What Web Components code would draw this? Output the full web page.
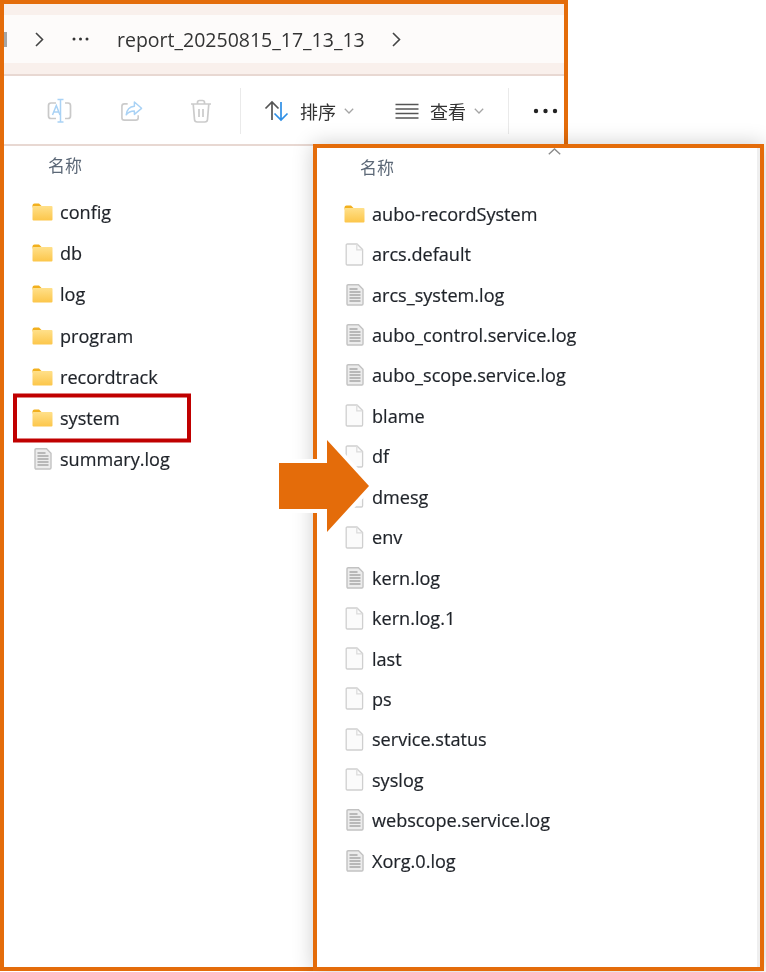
<!DOCTYPE html>
<html lang="zh">
<head>
<meta charset="utf-8">
<title>report</title>
<style>
	html, body { margin: 0; padding: 0; background: #fff; }
</style>
</head>
<body>
<shot-canvas>
	<explorer-window>
		<address-bar slot="top"></address-bar>
		<tool-bar slot="top"></tool-bar>
		<column-head>名称</column-head>
		<file-list gap="41.17">
			<file-row icon="folder">config</file-row>
			<file-row icon="folder">db</file-row>
			<file-row icon="folder">log</file-row>
			<file-row icon="folder">program</file-row>
			<file-row icon="folder">recordtrack</file-row>
			<file-row icon="folder" selected>system</file-row>
			<file-row icon="log">summary.log</file-row>
		</file-list>
	</explorer-window>
	<detail-panel>
		<column-head>名称</column-head>
		<file-list gap="40.44">
			<file-row icon="folder">aubo-recordSystem</file-row>
			<file-row icon="doc">arcs.default</file-row>
			<file-row icon="log">arcs_system.log</file-row>
			<file-row icon="log">aubo_control.service.log</file-row>
			<file-row icon="log">aubo_scope.service.log</file-row>
			<file-row icon="doc">blame</file-row>
			<file-row icon="doc">df</file-row>
			<file-row icon="doc">dmesg</file-row>
			<file-row icon="doc">env</file-row>
			<file-row icon="log">kern.log</file-row>
			<file-row icon="doc">kern.log.1</file-row>
			<file-row icon="doc">last</file-row>
			<file-row icon="doc">ps</file-row>
			<file-row icon="doc">service.status</file-row>
			<file-row icon="doc">syslog</file-row>
			<file-row icon="log">webscope.service.log</file-row>
			<file-row icon="log">Xorg.0.log</file-row>
		</file-list>
	</detail-panel>
	<big-arrow></big-arrow>
</shot-canvas>

<script>
const UI_FONT = `"Open Sans", "Noto Sans CJK SC", sans-serif`;

const ICONS = {
	folder: `<svg width="21" height="18" viewBox="0 0 21 18">
		<defs><linearGradient id="f" x1="0" y1="0" x2="0" y2="1"><stop offset="0" stop-color="#ffe08a"/><stop offset="1" stop-color="#fcc64a"/></linearGradient></defs>
		<path d="M0.5 2.5q0-2 2-2h4.5l2.5 2.5v1.5h-9z" fill="#f2b01e"/>
		<rect x="0.5" y="3" width="20" height="14.5" rx="1" fill="url(#f)"/>
	</svg>`,
	doc: `<svg width="19" height="23" viewBox="0 0 19 23" fill="#fbfbfb" stroke="#cfcfcf" stroke-width="1.300">
		<path d="M1.200 2.200q0-1.200 1.200-1.200h9.600l5.600 5.600v14.200q0 1.200-1.200 1.200h-14q-1.200 0-1.200-1.200z"/>
		<path d="M11.800 1v5.800h5.800" fill="none" stroke="#dcdcdc"/>
	</svg>`,
	log: `<svg width="18" height="22" viewBox="0 0 18 22">
		<path d="M1 2q0-1.200 1.200-1.200h10.300l4.500 4.500v14.500q0 1.200-1.200 1.200h-13.600q-1.200 0-1.200-1.200z" fill="#ececec" stroke="#c2c2c2" stroke-width="1.400"/>
		<path d="M3.500 5h8M3.500 8h11M3.500 11h11M3.500 14h11M3.500 17h11" stroke="#a6a6a6" stroke-width="1.300"/>
	</svg>`,
	rename: `<svg width="26" height="26" viewBox="0 0 26 26" fill="none">
		<path d="M9 5H4q-2.500 0-2.500 2.500v10.500q0 2.500 2.500 2.500H9M18 5h3q2.500 0 2.500 2.500v10.500q0 2.500-2.500 2.500h-3" stroke="#c9c9c9" stroke-width="1.700"/>
		<path d="M13.500 1.500v22.500M10.500 1.500h6M10.500 24h6" stroke="#a9d2f5" stroke-width="1.500"/>
		<path d="M5.500 17l3.800-9.500 3.700 9.500M6.800 14h5" stroke="#a9d2f5" stroke-width="1.500"/>
	</svg>`,
	share: `<svg width="23" height="23" viewBox="0 0 24 24" fill="none">
		<path d="M8 4H4.500Q2 4 2 6.500v12Q2 21 4.500 21h12q2.500 0 2.500-2.500V16" stroke="#cbcbcb" stroke-width="1.700"/>
		<path d="M15 2l7.500 6.700L15 15v-3.500c-4 0-6.500 1.200-8.500 4 .5-5 3-8.500 8.500-9z" stroke="#a9d2f5" stroke-width="1.500" stroke-linejoin="round"/>
	</svg>`,
	trash: `<svg width="22" height="24" viewBox="0 0 22 24" fill="none" stroke="#cbcbcb" stroke-width="1.700">
		<path d="M1 5h20M7.500 5V3.500Q7.500 1.500 9.500 1.500h3q2 0 2 2V5M3.200 5l1.300 15.500q.2 2.500 2.700 2.500h7.600q2.500 0 2.700-2.500L18.800 5M9 10v8M13 10v8"/>
	</svg>`,
	sort: `<svg width="25" height="22" viewBox="0 0 25 22" fill="none" stroke-width="1.700">
		<path d="M8 20V2M1.500 8.500L8 2l6.500 6.500" stroke="#555"/>
		<path d="M17 2v18M10.500 13.500L17 20l6.500-6.500" stroke="#2e8fe6"/>
	</svg>`,
	lines: `<svg width="24" height="16" viewBox="0 0 24 16" fill="none" stroke="#555" stroke-width="1.500">
		<path d="M0.500 1.500h23M0.500 6h23M0.500 10.500h23M0.500 15h23"/>
	</svg>`,
	more: `<svg width="25" height="6" viewBox="0 0 25 6" fill="#222"><circle cx="3" cy="3" r="2.200"/><circle cx="12.500" cy="3" r="2.200"/><circle cx="22" cy="3" r="2.200"/></svg>`,
	dots: `<svg width="17" height="4" viewBox="0 0 17 4" fill="#333"><circle cx="2" cy="2" r="1.500"/><circle cx="8.500" cy="2" r="1.500"/><circle cx="15" cy="2" r="1.500"/></svg>`,
	next: `<svg width="9" height="15" viewBox="0 0 9 15" fill="none" stroke="#444" stroke-width="1.600"><path d="M1 1l6.500 6.500L1 14"/></svg>`,
	drop: `<svg width="10" height="6" viewBox="0 0 10 6" fill="none" stroke="#a5a5a5" stroke-width="1.300"><path d="M.8.800L5 5 9.200.800"/></svg>`,
	up: `<svg width="13" height="7" viewBox="0 0 13 7" fill="none" stroke="#8a8a8a" stroke-width="1.400"><path d="M.8 6.200L6.500 1l5.700 5.200"/></svg>`,
};

class UiIcon extends HTMLElement {
	connectedCallback() {
		const name = this.getAttribute("name");
		this.attachShadow({ mode: "open" }).innerHTML = `
			<style>:host { display: inline-flex; flex: none; align-items: center; justify-content: center; } svg { display: block; }</style>
			${ICONS[name] || ""}`;
	}
}

class ShotCanvas extends HTMLElement {
	constructor() {
		super();
		// the reference is a rescaled screenshot, so everything is a touch soft
		this.attachShadow({ mode: "open" }).innerHTML = `
			<style>
				:host { display: block; position: relative; width: 766px; height: 972px; overflow: hidden; background: #fff; font-family: ${UI_FONT}; filter: blur(.35px); }
			</style>
			<slot></slot>`;
	}
}

class ExplorerWindow extends HTMLElement {
	constructor() {
		super();
		this.attachShadow({ mode: "open" }).innerHTML = `
			<style>
				:host { display: flex; flex-direction: column; box-sizing: border-box; width: 568px; height: 971px; border: 4px solid #e46c0a; background: #fff; }
				.body { padding: 6px 0 0 28px; }
			</style>
			<slot name="top"></slot>
			<div class="body"><slot></slot></div>`;
	}
}

class DetailPanel extends HTMLElement {
	constructor() {
		super();
		this.attachShadow({ mode: "open" }).innerHTML = `
			<style>
				:host { display: block; position: absolute; left: 313px; top: 144px; box-sizing: border-box; width: 451px; height: 827px; padding: 6px 0 0 27px; border: 4px solid #e46c0a; background: linear-gradient(to left, #efefef 3px, #fff 3px); box-shadow: 0 0 20px rgba(0,0,0,.2); }
				.up { position: absolute; left: 231px; top: 0; }
			</style>
			<ui-icon class="up" name="up"></ui-icon>
			<slot></slot>`;
	}
}

class AddressBar extends HTMLElement {
	constructor() {
		super();
		this.attachShadow({ mode: "open" }).innerHTML = `
			<style>
				:host { display: block; box-sizing: border-box; height: 72px; padding: 11px 0; background: #f9f0ec; border-bottom: 2px solid #e8d8d2; }
				.bar { display: flex; align-items: center; height: 48px; background: #fdfbfa; color: #333; font-size: 19.500px; position: relative; }
				.stub { width: 3px; height: 15px; background: #a5a5a5; margin-right: 28px; }
				.dots { margin: 0 28px 0 28px; }
				.next { margin-left: 27px; }
			</style>
			<div class="bar">
				<div class="stub"></div>
				<ui-icon name="next"></ui-icon>
				<ui-icon class="dots" name="dots"></ui-icon>
				<span>report_20250815_17_13_13</span>
				<ui-icon class="next" name="next"></ui-icon>
			</div>`;
	}
}

class ToolBar extends HTMLElement {
	constructor() {
		super();
		this.attachShadow({ mode: "open" }).innerHTML = `
			<style>
				:host { display: flex; align-items: center; box-sizing: border-box; height: 70px; padding: 2px 0 0 43px; border-bottom: 2px solid #e8d8d2; color: #333; font-size: 18px; }
				.sep { width: 1px; height: 46px; background: #eaeaea; flex: none; }
				span { margin: 0 8px 0 11px; }
			</style>
			<ui-icon name="rename" style="margin-right:47px"></ui-icon>
			<ui-icon name="share" style="margin-right:47px"></ui-icon>
			<ui-icon name="trash" style="margin-right:28px"></ui-icon>
			<div class="sep" style="margin-right:23px"></div>
			<ui-icon name="sort"></ui-icon>
			<span>排序</span>
			<ui-icon name="drop" style="margin-right:41px"></ui-icon>
			<ui-icon name="lines"></ui-icon>
			<span>查看</span>
			<ui-icon name="drop" style="margin-right:24px"></ui-icon>
			<div class="sep" style="margin-right:24px"></div>
			<ui-icon name="more"></ui-icon>`;
	}
}

class ColumnHead extends HTMLElement {
	constructor() {
		super();
		this.attachShadow({ mode: "open" }).innerHTML = `
			<style>
				:host { display: block; margin-left: 16px; height: 28px; line-height: 28px; font-size: 17px; color: #5c6877; }
			</style>
			<slot></slot>`;
	}
}

class FileList extends HTMLElement {
	constructor() {
		super();
		const gap = this.getAttribute("gap") || "41";
		this.attachShadow({ mode: "open" }).innerHTML = `
			<style>
				:host { display: grid; grid-auto-rows: ${gap}px; margin-top: 11.500px; }
			</style>
			<slot></slot>`;
	}
}

class FileRow extends HTMLElement {
	constructor() {
		super();
		const icon = this.getAttribute("icon");
		this.attachShadow({ mode: "open" }).innerHTML = `
			<style>
				:host { display: flex; align-items: center; position: relative; font-size: 18.100px; color: #1f2329; white-space: nowrap; -webkit-text-stroke: .2px #1f2329; }
				.ico { display: flex; justify-content: center; width: 21px; margin-right: 7px; }
				:host([selected])::after { content: ""; position: absolute; left: -19px; top: 0; width: 178px; height: 49px; box-sizing: border-box; border: 4px solid #c00000; transform: translateY(-3.500px); }
			</style>
			<div class="ico"><ui-icon name="${icon}"></ui-icon></div>
			<slot></slot>`;
	}
}

class BigArrow extends HTMLElement {
	constructor() {
		super();
		this.attachShadow({ mode: "open" }).innerHTML = `
			<style>
				:host { display: block; position: absolute; left: 270px; top: 430px; width: 110px; height: 112px; }
				svg { display: block; overflow: visible; }
			</style>
			<svg width="110" height="112" viewBox="270 430 110 112">
				<polygon points="279,463 327,463 327,440 369,486 327,532 327,509 279,509" fill="#e46c0a" stroke="#fff" stroke-width="8" paint-order="stroke"/>
			</svg>`;
	}
}

customElements.define("ui-icon", UiIcon);
customElements.define("shot-canvas", ShotCanvas);
customElements.define("explorer-window", ExplorerWindow);
customElements.define("detail-panel", DetailPanel);
customElements.define("address-bar", AddressBar);
customElements.define("tool-bar", ToolBar);
customElements.define("column-head", ColumnHead);
customElements.define("file-list", FileList);
customElements.define("file-row", FileRow);
customElements.define("big-arrow", BigArrow);
</script>
</body>
</html>
